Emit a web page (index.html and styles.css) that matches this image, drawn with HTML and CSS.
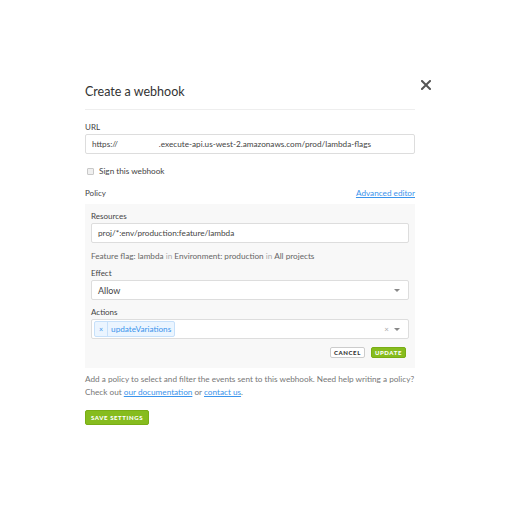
FILE: index.html
```html
<!DOCTYPE html>
<html>
<head>
<meta charset="utf-8">
<link rel="stylesheet" href="styles.css">
</head>
<body>
<div class="modal">
  <div class="header">
    <h1 class="title">Create a webhook</h1>
    <span class="close">
      <svg width="10" height="10" viewBox="0 0 10 10"><path d="M1 1L9 9M9 1L1 9" stroke="#555" stroke-width="2" stroke-linecap="square"/></svg>
    </span>
  </div>
  <div class="field">
    <label class="label">URL</label>
    <div class="input url"><span>https://</span><span class="url-rest">.execute-api.us-west-2.amazonaws.com/prod/lambda-flags</span></div>
  </div>
  <div class="check-row">
    <span class="checkbox"></span>
    <span>Sign this webhook</span>
  </div>
  <div class="policy-head">
    <span class="label">Policy</span>
    <a class="link" href="#">Advanced editor</a>
  </div>
  <div class="panel">
    <div class="field">
      <label class="label">Resources</label>
      <div class="input">proj/*:env/production:feature/lambda</div>
    </div>
    <div class="desc">Feature flag: lambda <span class="muted">in</span> Environment: production <span class="muted">in</span> All projects</div>
    <div class="field">
      <label class="label">Effect</label>
      <div class="input select"><span class="big">Allow</span><span class="caret"></span></div>
    </div>
    <div class="field">
      <label class="label">Actions</label>
      <div class="input select multi">
        <span class="tag"><span class="tag-x">×</span><span class="tag-text">updateVariations</span></span>
        <span class="spacer"></span>
        <span class="clear">×</span>
        <span class="caret"></span>
      </div>
    </div>
    <div class="buttons">
      <button class="btn btn-cancel">CANCEL</button>
      <button class="btn btn-green">UPDATE</button>
    </div>
  </div>
  <p class="help">Add a policy to select and filter the events sent to this webhook. Need help writing a policy?<br>Check out <a class="link" href="#">our documentation</a> or <a class="link" href="#">contact us</a>.</p>
  <button class="btn btn-green btn-save">SAVE SETTINGS</button>
</div>
</body>
</html>
```
FILE: styles.css
```css
* { box-sizing: border-box; }
html, body { margin: 0; padding: 0; background: #fff; }
body {
  font-family: Lato, "Open Sans", sans-serif;
  color: #444;
  width: 512px;
  height: 512px;
}
.modal {
  width: 330px;
  margin-left: 85px;
  padding-top: 78px;
}
.header {
  display: flex;
  justify-content: space-between;
  align-items: flex-start;
  border-bottom: 1px solid #eee;
  padding-bottom: 9px;
  margin-bottom: 12px;
  position: relative;
}
.title {
  margin: 0;
  margin-top: 6px;
  font-weight: 400;
  font-size: 12.5px;
  line-height: 16px;
  color: #333;
}
.close {
  position: absolute;
  right: -16px;
  top: 2px;
  width: 10px;
  height: 10px;
  display: block;
}
.close svg { display: block; }
.field { display: flex; flex-direction: column; }
.label {
  font-size: 8px;
  line-height: 10px;
  color: #444;
  margin-bottom: 2px;
}
.input {
  height: 20px;
  border: 1px solid #ddd;
  border-radius: 2px;
  background: #fff;
  font-size: 8.2px;
  color: #444;
  display: flex;
  align-items: center;
  padding: 0 6px;
}
.url-rest { margin-left: 41px; }
.check-row {
  display: flex;
  align-items: center;
  margin-top: 12px;
  font-size: 8.2px;
  line-height: 10px;
  color: #444;
  padding-left: 2px;
}
.checkbox {
  width: 7px;
  height: 7px;
  border: 1px solid #c8c8c8;
  border-radius: 1px;
  background: #f0f0f0;
  margin-right: 5px;
}
.policy-head {
  display: flex;
  justify-content: space-between;
  align-items: center;
  margin-top: 12px;
  line-height: 10px;
}
.policy-head .label { margin: 0; }
.link {
  color: #3a94ec;
  text-decoration: underline;
  font-size: 8.2px;
}
.help .link { font-size: inherit; }
.panel {
  margin-top: 6px;
  background: #f8f8f8;
  padding: 7px 6px 10px 6px;
}
.desc {
  margin-top: 8px;
  font-size: 8.2px;
  line-height: 10px;
  color: #666;
  margin-bottom: 7px;
}
.muted { color: #aaa; }
.panel .field + .field { margin-top: 7px; }
.big { font-size: 9px; color: #444; }
.select { justify-content: space-between; padding-right: 8px; }
.caret {
  width: 0; height: 0;
  border-left: 3px solid transparent;
  border-right: 3px solid transparent;
  border-top: 3px solid #888;
}
.multi { padding-left: 2px; }
.spacer { flex: 1; }
.tag {
  display: flex;
  align-items: center;
  height: 16px;
  border: 1px solid #c6e0fa;
  background: #ebf5ff;
  border-radius: 2px;
  color: #3a94ec;
  font-size: 8.2px;
}
.tag-x {
  padding: 0 4px;
  border-right: 1px solid #c6e0fa;
  height: 100%;
  display: flex;
  align-items: center;
  font-size: 7px;
}
.tag-text { padding: 0 3px 0 3px; }
.clear { color: #aaa; font-size: 8px; margin-right: 5px; }
.buttons {
  display: flex;
  justify-content: flex-end;
  gap: 6px;
  margin-top: 8px;
  padding-right: 3px;
}
.btn {
  font-family: Lato, sans-serif;
  font-weight: 900;
  font-size: 6px;
  letter-spacing: 0.6px;
  height: 11px;
  padding: 0 3px;
  border-radius: 2px;
  line-height: 9px;
  cursor: pointer;
}
.btn-cancel {
  background: #fff;
  border: 1px solid #ccc;
  color: #333;
}
.btn-green {
  background: #86bc1e;
  border: 1px solid #79ad15;
  color: #fff;
}
.help {
  margin: 5px 0 0 0;
  font-size: 8.2px;
  line-height: 13px;
  color: #777;
}
.btn-save {
  margin-top: 11px;
  height: 15px;
  padding: 0 5px;
  font-size: 6px;
  letter-spacing: 0.6px;
}
```
